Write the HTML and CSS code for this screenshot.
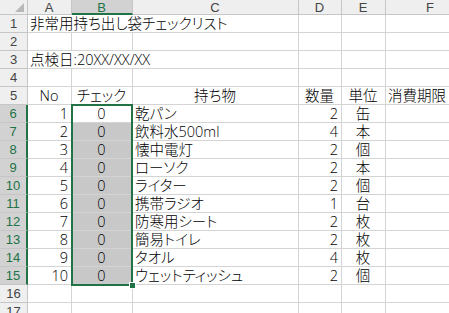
FILE: index.html
```html
<!DOCTYPE html>
<html lang="ja">
<head>
  <meta charset="UTF-8">
  <title>非常用持ち出し袋チェックリスト</title>
  <link rel="stylesheet" href="styles.css">
</head>
<body>
  <div class="sheet-wrap">
    <div class="sheet" id="sheet"></div>
    <div class="selection"></div>
    <div class="fill-handle"></div>
  </div>

  <script>
    const columns = ["A", "B", "C", "D", "E", "F"];
    const items = [
      [1, "乾パン", 2, "缶"],
      [2, "飲料水500ml", 4, "本"],
      [3, "懐中電灯", 2, "個"],
      [4, "ローソク", 2, "本"],
      [5, "ライター", 2, "個"],
      [6, "携帯ラジオ", 1, "台"],
      [7, "防寒用シート", 2, "枚"],
      [8, "簡易トイレ", 2, "枚"],
      [9, "タオル", 4, "枚"],
      [10, "ウェットティッシュ", 2, "個"]
    ];

    const sheet = document.getElementById("sheet");

    function cell(text, cls) {
      const div = document.createElement("div");
      div.className = "cell " + (cls || "");
      div.textContent = text;
      sheet.appendChild(div);
      return div;
    }

    // column header row
    cell("", "corner");
    columns.forEach(function (c) {
      cell(c, "col-head" + (c === "B" ? " picked" : ""));
    });

    function emptyRow(n) {
      cell(n, "row-head");
      columns.forEach(function () { cell("", ""); });
    }

    // row 1 - 5
    cell(1, "row-head");
    cell("非常用持ち出し袋チェックリスト", "span3");
    cell("", ""); cell("", ""); cell("", "");
    emptyRow(2);
    cell(3, "row-head");
    cell("点検日:20XX/XX/XX", "span3");
    cell("", ""); cell("", ""); cell("", "");
    emptyRow(4);
    cell(5, "row-head");
    ["No", "チェック", "持ち物", "数量", "単位"].forEach(function (t) {
      cell(t, "center");
    });
    cell("消費期限", "");

    // list rows 6 - 15
    items.forEach(function (item, i) {
      cell(i + 6, "row-head picked");
      cell(item[0], "num");
      cell(0, "center" + (i > 0 ? " shaded" : ""));
      cell(item[1], "");
      cell(item[2], "num");
      cell(item[3], "center");
      cell("", "");
    });

    emptyRow(16);
    emptyRow(17);
  </script>
</body>
</html>
```

FILE: styles.css
```css
html, body {
  margin: 0;
  padding: 0;
  background: #fff;
  overflow: hidden;
}
.sheet-wrap {
  position: relative;
  width: 449px;
  height: 313px;
  overflow: hidden;
}
.sheet {
  display: grid;
  grid-template-columns: 28px 44px 61px 166px 43px 44px 90px;
  grid-template-rows: 15px;
  grid-auto-rows: 18px;
  font-family: "Open Sans", "Noto Sans CJK JP", sans-serif;
  font-feature-settings: "palt";
  font-size: 14.5px;
  font-weight: 300;
  color: #000;
}
.cell {
  box-sizing: border-box;
  border-right: 1px solid #d4d4d4;
  border-bottom: 1px solid #d4d4d4;
  padding: 0 3px 0 2px;
  line-height: 18px;
  white-space: nowrap;
}
.span3 {
  grid-column: span 3;
}
.center {
  text-align: center;
}
.num {
  text-align: right;
}
.shaded {
  background: #c8c8c8;
}
.corner,
.col-head,
.row-head {
  background: #efefef;
  color: #444;
  font-family: "Liberation Sans", sans-serif;
  font-size: 13px;
  font-weight: 400;
  border-color: #c6c6c6;
}
.col-head {
  text-align: center;
  line-height: 15px;
}
.row-head {
  text-align: center;
  padding: 0;
}
.corner {
  position: relative;
}
.corner::after {
  content: "";
  position: absolute;
  right: 3px;
  bottom: 2px;
  border-left: 9px solid transparent;
  border-bottom: 9px solid #b8b8b8;
}
.col-head.picked {
  background: #d2d2d2;
  color: #217346;
  border-bottom: 2px solid #217346;
}
.row-head.picked {
  background: #d2d2d2;
  color: #217346;
  border-right: 2px solid #217346;
}
.selection {
  position: absolute;
  left: 71px;
  top: 104px;
  width: 62px;
  height: 182px;
  box-sizing: border-box;
  border: 2px solid #217346;
  pointer-events: none;
}
.fill-handle {
  position: absolute;
  left: 129px;
  top: 282px;
  width: 5px;
  height: 5px;
  background: #217346;
  border: 1px solid #fff;
}
```
